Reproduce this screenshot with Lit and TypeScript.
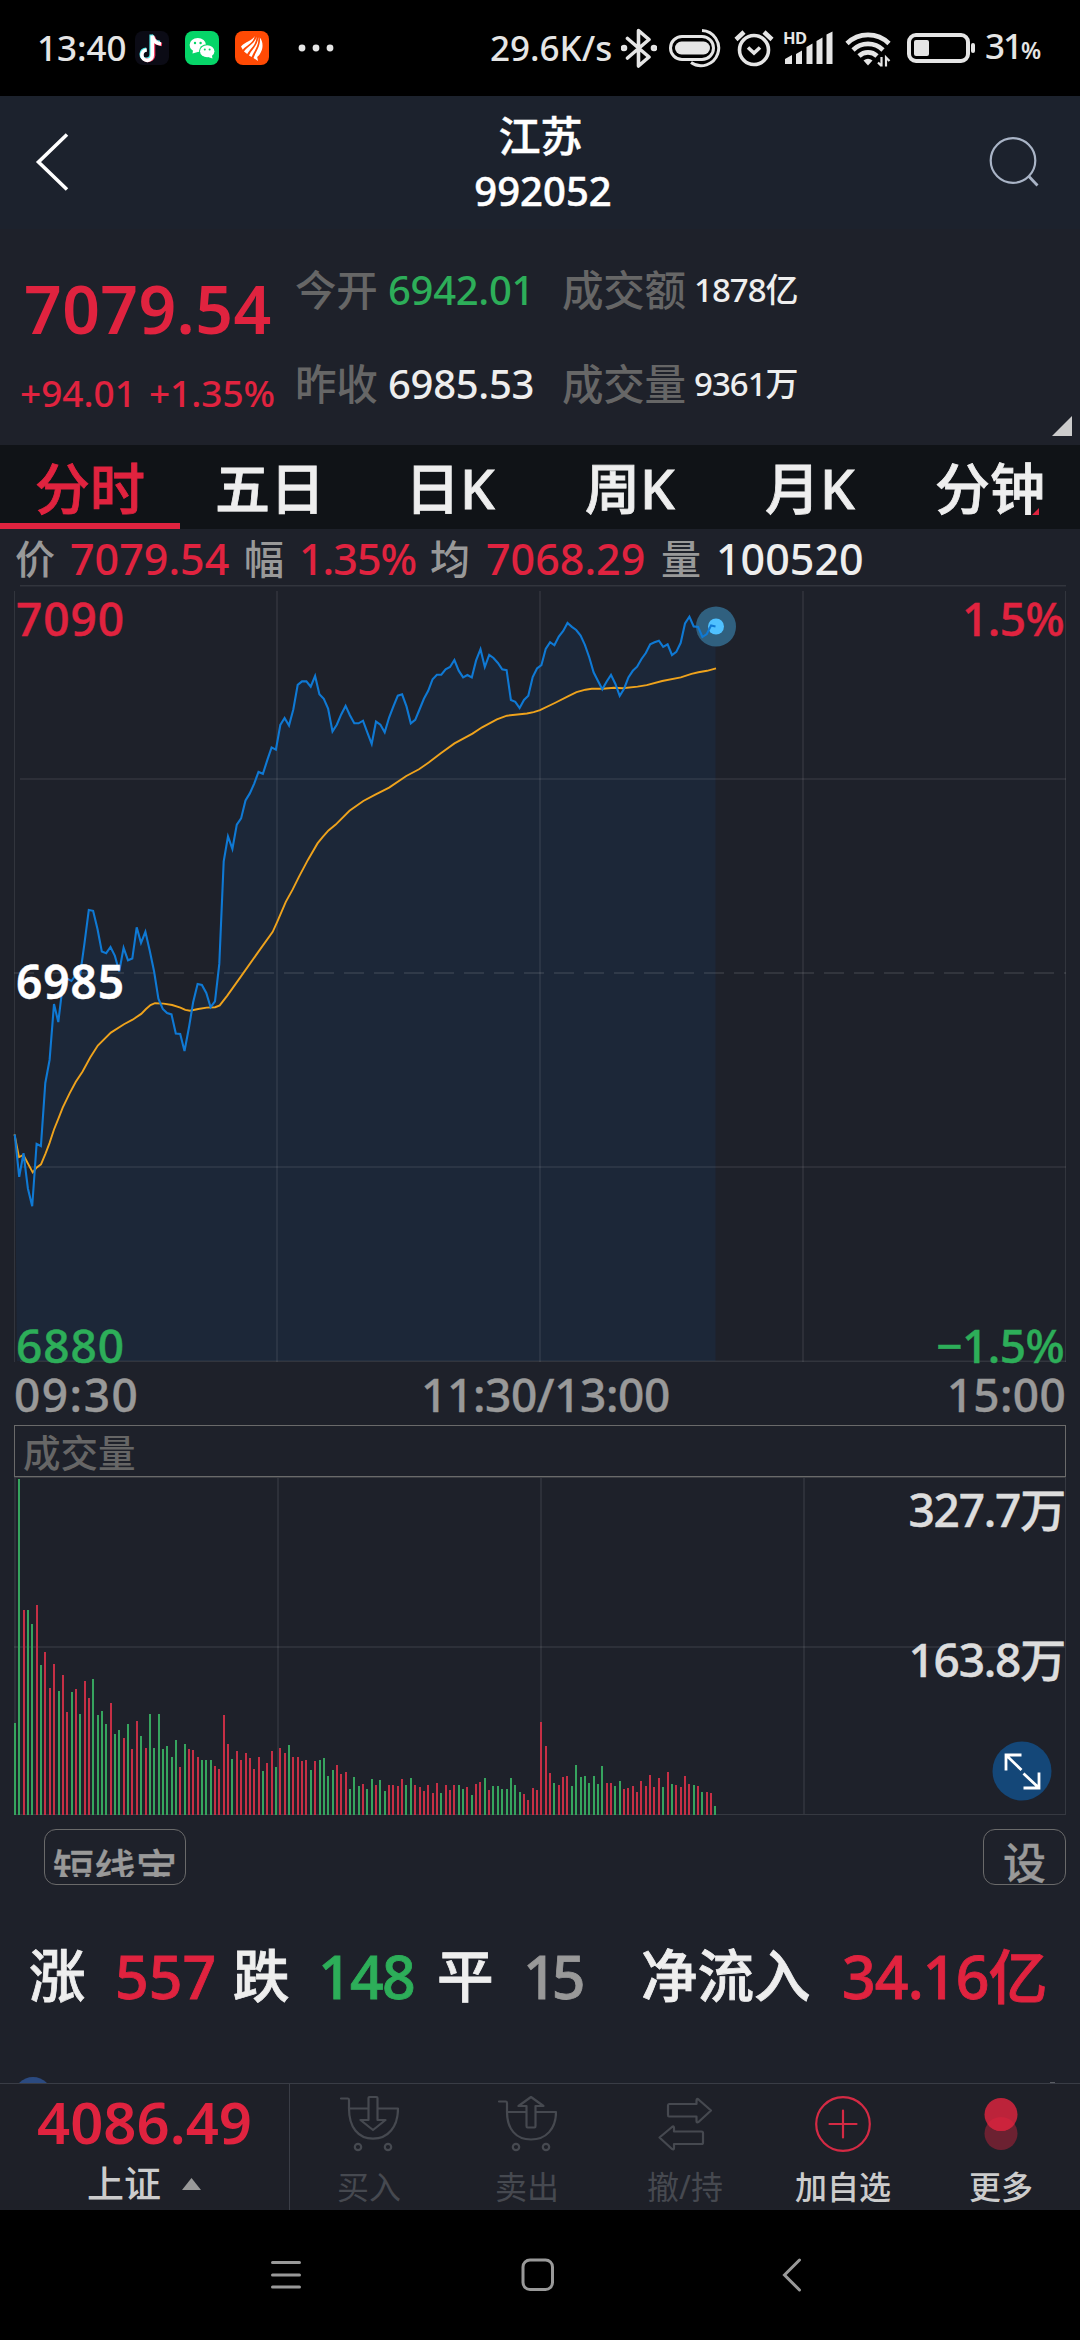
import { LitElement, html, svg, css } from "lit";
import { customElement } from "lit/decorators.js";

const STEP = 4.352;

// One y value per trading minute, starting at 09:30.
const PRICE: number[] = [
  1134.5, 1176.9, 1153.2, 1188.5, 1206.3, 1143.8, 1146, 1083, 1059.9, 1004, 1022, 985.4, 978.6, 981, 975, 975,
  943.8, 909.9, 910.8, 929, 951.4, 953.2, 947, 955.9, 971.5, 947.8, 960.3, 958.6, 927.3, 942.9, 931.8, 950.5,
  971.5, 998.7, 1009, 1013, 1014.4, 1033.6, 1034, 1051, 1027.8, 1001.9, 984, 984.9, 992.9, 1007.2, 1001.4, 963.9,
  861.3, 836.3, 848.8, 824.6, 818.4, 800.5, 793.4, 783.6, 772, 773.8, 760.4, 747.4, 749.7, 725, 718, 725.5,
  709.5, 684.9, 681.4, 681.4, 686.7, 676, 694.3, 698.8, 708.6, 731.4, 724.7, 714.4, 705.9, 715.3, 723.3, 723.3,
  720.7, 732.3, 743.9, 721.6, 724.7, 732.3, 717.5, 706.4, 695.7, 694.3, 706.4, 723.3, 719.8, 709.5, 698.8, 690.8,
  679.2, 674.7, 674.7, 669.3, 667, 660, 670.7, 677.4, 675, 677.4, 660.4, 649.2, 667, 655, 658, 663,
  669.3, 670.2, 700, 701.9, 708, 700, 695.7, 677, 668.5, 665.2, 648.9, 642.2, 645.3, 636.6, 631, 622.9,
  626.9, 630, 635.6, 644.8, 657.5, 672.3, 681, 689.2, 681.5, 674.9, 684, 695.8, 688.7, 677.4, 670.8, 666.7,
  659, 653, 644.3, 642.2, 640.7, 646.8, 644.3, 655, 651.9, 642.8, 623.4, 616.7, 626.4, 626.9, 637, 634,
  625.4, 626.4,
];

const AVERAGE =
  "14.5,1134.4 19,1157.2 23.4,1155 32.7,1172.4 36.8,1167.5 41,1164.3 45.5,1153.6 49.6,1142.9 54,1129.5 58.5,1118.4 " +
  "62.7,1107.6 69.6,1093.4 75.8,1081.8 82.6,1071.5 90.2,1057.6 97.8,1045.6 110.9,1032.6 124,1024.2 132.6,1019.7 " +
  "141.2,1013.9 146,1009 150.5,1005 155,1003.2 163.6,1003.6 172.2,1005 180.4,1007.6 185.3,1009.9 190,1010.8 " +
  "198.3,1009 206.6,1007.6 215.2,1007.2 219.7,1005.4 227.3,995.6 241,976.4 258.3,951.9 272.7,931.8 277.2,921.9 " +
  "285.8,901.9 292.7,889.4 298.9,876.9 307.9,859.9 317.5,843.4 323,836.7 328.5,830.4 335.7,824.6 349.5,810.8 " +
  "363.3,801 375.3,794.7 389.1,787.6 406.3,776 419,769.3 428.7,762.6 440.8,753.2 454.5,743.4 472.5,733.6 " +
  "482.1,727.3 496.9,719.3 506.9,715.7 526.9,713.5 533.7,712.1 540,710.2 554.8,703 567.9,696.3 576.5,692.2 " +
  "585.5,689.7 591.7,688.7 602.7,688.7 614,687.7 622.6,688.2 637.5,686.6 646.7,685.1 662.2,681 680.8,677.4 " +
  "691.5,673.9 698.4,672.3 707,670.8 716,668.3";

// Direction (G down, R up) and bar height per minute.
const VOLUME = (
  "G92 G336 R205 G205 G191 R210 G150 R163 R127 R151 G124 R140 R103 G123 R126 G101 R134 R117 G136 G100 G104 G91 R112 " +
  "G81 G85 R77 G91 R66 R94 G79 R67 G101 G67 G101 G66 G69 G58 G75 R48 G71 R66 R65 R58 G55 G55 G55 R49 R46 R100 R71 " +
  "G56 R64 R55 R62 R57 R46 R58 G44 R52 R64 G48 R67 R62 G70 R58 R58 R54 R55 G45 R54 G55 G57 G39 G45 R50 R41 R43 G26 " +
  "G38 G29 R31 G26 G36 R30 G35 G24 R30 R30 R29 R36 G30 G37 R30 R28 R24 R30 R22 R32 G22 R30 R25 R30 G30 G26 R28 G20 " +
  "R31 R33 G37 R25 G29 G29 G26 G26 G37 G30 G23 R21 R15 R27 R25 R93 R69 R42 G32 R30 R38 R39 G29 G50 G38 G39 G32 G39 " +
  "G31 G49 R32 R32 G29 G34 R26 R27 R29 R23 R34 R29 R40 R28 R37 G28 R43 G31 R30 R28 R39 R31 G30 R29 G23 R23 R22 G9"
).split(" ");

const TABS = ["分时", "五日", "日K", "周K", "月K", "分钟"];

const baseText = css`
  :host {
    display: block;
    font-family: "Noto Sans", "Noto Sans CJK SC", sans-serif;
    font-weight: 500;
  }
  * {
    box-sizing: border-box;
  }
  svg {
    display: block;
    flex: none;
  }
  .up {
    color: #e0233f;
  }
  .down {
    color: #2dae59;
  }
`;

@customElement("status-bar")
class StatusBar extends LitElement {
  static styles = [
    baseText,
    css`
      .bar {
        height: 96px;
        background: #000;
        color: #e5e5e5;
        display: flex;
        align-items: center;
        justify-content: space-between;
        padding: 0 43px 0 37px;
        font-size: 35px;
        line-height: 40px;
      }
      .side {
        display: flex;
        align-items: center;
      }
      .time {
        width: 98px;
      }
      .apps {
        display: flex;
        gap: 16px;
      }
      .dots {
        margin-left: 29px;
      }
      .speed {
        width: 131px;
      }
      .ring {
        margin-left: 12px;
      }
      .alarm {
        margin-left: 11px;
      }
      .signal {
        margin-left: 9px;
      }
      .wifi {
        margin-left: 12px;
      }
      .battery {
        margin-left: 16px;
      }
      .level {
        display: flex;
        align-items: baseline;
        margin-left: 8px;
        width: 52px;
        letter-spacing: -2px;
      }
      .level small {
        font-size: 23px;
        font-weight: 600;
      }
    `,
  ];
  render() {
    return html`<div class="bar">
      <div class="side">
        <span class="time">13:40</span>
        <div class="apps">
          <svg width="34" height="34" viewBox="0 0 34 34">
            <rect width="34" height="34" rx="8" fill="#0b0b15" />
            <g fill="none" stroke-width="3.6">
              <path d="M16.2 3.5v20a5 5 0 1 1-5-5.3M16.5 4c.6 4.500 4 7 8.500 7.500" stroke="#4de8ea" />
              <path d="M18.500 5.500v19a5.500 5.500 0 0 1-9 3.500M18.500 6c.6 4.500 4 7 8.500 7.500" stroke="#f8385c" />
              <path d="M17.300 4.500v19.500a5.200 5.200 0 1 1-5.500-5M17.500 5c.6 4.500 4 7.500 8.500 8" stroke="#fff" />
            </g>
          </svg>
          <svg width="34" height="34" viewBox="0 0 34 34">
            <rect width="34" height="34" rx="8" fill="#06d568" />
            <path d="M7.500 22.500l.8-4.500 4.500 3z" fill="#fff" />
            <ellipse cx="12.800" cy="14" rx="8.200" ry="7" fill="#fff" />
            <ellipse cx="22" cy="20" rx="8" ry="6.800" fill="#06d568" />
            <path d="M27.500 27.500l-.8-4-3.700 2.500z" fill="#fff" />
            <ellipse cx="22.200" cy="20.300" rx="7.200" ry="6" fill="#fff" />
            <g fill="#06d568">
              <circle cx="10" cy="12" r="1.200" /><circle cx="15.600" cy="12" r="1.200" />
              <circle cx="19.800" cy="18.600" r="1" /><circle cx="24.600" cy="18.600" r="1" />
            </g>
          </svg>
          <svg width="34" height="34" viewBox="0 0 34 34">
            <rect width="34" height="34" rx="8" fill="#ff4a04" />
            <g fill="#fff">
              <path d="M19.800 5C17 10 10.500 10.500 6 15.500l1.800 3.200C10.500 14.500 18 13 19.800 5z" />
              <path d="M21.500 5.500C20 13 12.500 15 9 20.500l3.200 2.500C15 17.500 21.500 14 21.500 5.500z" />
              <path d="M23.200 6C23.200 14 17 18 14 24.500l2.600 1.600C19 20 24.500 14.500 23.200 6z" />
              <path d="M24.800 6.500c1.200 8-3.500 13-6.300 20.500l4.500 3-.8-4C27 22 30 13 24.800 6.500z" />
            </g>
          </svg>
        </div>
        <svg class="dots" width="36" height="8" viewBox="0 0 36 8" fill="#e5e5e5">
          <circle cx="4" cy="4" r="3.400" /><circle cx="18" cy="4" r="3.400" /><circle cx="32" cy="4" r="3.400" />
        </svg>
      </div>
      <div class="side">
        <span class="speed">29.6K/s</span>
        <svg width="36" height="40" viewBox="0 0 36 40" fill="none" stroke="#e5e5e5" stroke-width="3.600" stroke-linejoin="round" stroke-linecap="round">
          <path d="M6.500 10.500L28 29l-10.500 9V2.500L28 11.500 6.500 30" />
          <circle cx="3" cy="20" r="1.500" /><circle cx="33" cy="20" r="1.500" />
        </svg>
        <svg class="ring" width="54" height="40" viewBox="0 0 54 40" fill="none" stroke="#e5e5e5">
          <rect x="1.500" y="8.500" width="43" height="23" rx="11.500" stroke-width="3" />
          <rect x="6" y="13.500" width="35" height="13" rx="6.500" fill="#e5e5e5" stroke="none" />
          <path d="M33 2.500a17.600 17.600 0 1 1-11 32" stroke-width="3" />
        </svg>
        <svg class="alarm" width="40" height="40" viewBox="0 0 40 40" fill="none" stroke="#e5e5e5" stroke-width="3.600">
          <circle cx="20" cy="22" r="14.500" />
          <path d="M14 19.500l6 5.500 6-5.500" />
          <path d="M2 11.500L10 4M30 4l8 7.500" stroke-width="4.500" />
        </svg>
        <svg class="signal" width="50" height="40" viewBox="0 0 50 40" fill="#e5e5e5">
          <path d="M2 31l7-4v9H2zM13 26l6-3.500V36h-6zM23.500 19l6-3.500V36h-6zM33.500 13l6-3.500V36h-6zM43.500 6.500l6-3V36h-6z" />
          <text x="0" y="16" font-size="16.500" font-weight="700" letter-spacing="-0.6">HD</text>
        </svg>
        <svg class="wifi" width="46" height="40" viewBox="0 0 46 40" fill="none" stroke="#e5e5e5">
          <path d="M2 15.500a30 30 0 0 1 42 0M8 22a21.500 21.500 0 0 1 30 0M14 28a13 13 0 0 1 18 0" stroke-width="4.600" />
          <path d="M18.500 32.500q4.500-3.500 9 0L23 37.500z" fill="#e5e5e5" stroke="none" />
          <path d="M36.500 29v9.500M33 34.500l3.500 3.500M41 38.500V29.500l3.500 3.500" stroke-width="2.200" />
        </svg>
        <svg class="battery" width="70" height="40" viewBox="0 0 70 40" fill="none">
          <rect x="2" y="7" width="59" height="26" rx="7" stroke="#e5e5e5" stroke-width="4" />
          <rect x="7" y="12" width="15" height="16" rx="2" fill="#e5e5e5" />
          <rect x="64" y="15" width="4" height="10" rx="2" fill="#e5e5e5" />
        </svg>
        <span class="level">31<small>%</small></span>
      </div>
    </div>`;
  }
}

@customElement("title-bar")
class TitleBar extends LitElement {
  static styles = [
    baseText,
    css`
      .bar {
        height: 133px;
        background: #1c222d;
        color: #fff;
        display: flex;
        justify-content: space-between;
        padding: 0 40px 0 34px;
      }
      .icon {
        margin-top: 34px;
      }
      .titles {
        padding: 12px 0 0 28px;
        text-align: center;
        -webkit-text-stroke: 0.5px currentColor;
      }
      .name {
        font-size: 42px;
        line-height: 56px;
        margin-left: -5px;
      }
      .code {
        font-size: 40px;
        line-height: 54px;
      }
    `,
  ];
  render() {
    return html`<div class="bar">
      <svg class="icon" width="36" height="64" viewBox="0 0 36 64" fill="none" stroke="#fff" stroke-width="3.600">
        <path d="M33 4.500L4.500 32 33 59.500" />
      </svg>
      <div class="titles">
        <div class="name">江苏</div>
        <div class="code">992052</div>
      </div>
      <svg class="icon" width="52" height="64" viewBox="0 0 52 64" fill="none" stroke="#a9b4c6" stroke-width="2.200">
        <circle cx="25" cy="30.500" r="22.300" />
        <path d="M40.500 46l9 9.500" stroke-width="2.800" />
      </svg>
    </div>`;
  }
}

@customElement("quote-panel")
class QuotePanel extends LitElement {
  static styles = [
    baseText,
    css`
      .panel {
        height: 216px;
        display: grid;
        grid-template-columns: 271px 1fr 20px;
        padding: 1px 8px 0 24px;
      }
      .price {
        font-size: 66px;
        line-height: 80px;
        margin-top: 38px;
        font-weight: 600;
        letter-spacing: 0.4px;
      }
      .change {
        display: flex;
        gap: 13px;
        font-size: 37px;
        line-height: 50px;
        margin-top: 20px;
        margin-left: -4px;
      }
      .facts {
        display: grid;
        grid-template-columns: 93px 174px 132px 1fr;
        grid-auto-rows: 60px;
        row-gap: 34px;
        padding-top: 30px;
        line-height: 60px;
        font-size: 40px;
        color: #eee;
        letter-spacing: -0.3px;
      }
      .label {
        color: #666;
        font-size: 41.5px;
      }
      .small {
        font-size: 33px;
        letter-spacing: -1px;
      }
      .corner {
        margin-top: 186px;
      }
    `,
  ];
  render() {
    return html`<div class="panel">
      <div>
        <div class="price up">7079.54</div>
        <div class="change up"><span>+94.01</span><span>+1.35%</span></div>
      </div>
      <div class="facts">
        <span class="label">今开</span><span class="down">6942.01</span>
        <span class="label">成交额</span><span class="small">1878亿</span>
        <span class="label">昨收</span><span>6985.53</span>
        <span class="label">成交量</span><span class="small">9361万</span>
      </div>
      <svg class="corner" width="20" height="20" viewBox="0 0 20 20"><path d="M20 0v20H0z" fill="#ccc" /></svg>
    </div>`;
  }
}

@customElement("period-tabs")
class PeriodTabs extends LitElement {
  static styles = [
    baseText,
    css`
      .tabs {
        display: grid;
        grid-template-columns: repeat(6, 180px);
        height: 84px;
        background: #101317;
      }
      .tab {
        color: #eee;
        font-size: 55px;
        line-height: 86px;
        height: 84px;
        text-align: center;
        border-bottom: 6px solid transparent;
        position: relative;
        -webkit-text-stroke: 0.8px currentColor;
      }
      .active {
        color: #e0233f;
        border-color: #e0233f;
      }
      .mark {
        position: absolute;
        right: 41px;
        top: 63px;
      }
    `,
  ];
  render() {
    return html`<div class="tabs">
      ${TABS.map(
        (t, i) => html`<div class="tab ${i === 0 ? "active" : ""}">
          ${t}${i === 5
            ? html`<svg class="mark" width="7" height="7" viewBox="0 0 7 7"><path d="M7 0v7H0z" fill="#e0233f" /></svg>`
            : ""}
        </div>`
      )}
    </div>`;
  }
}

@customElement("price-chart")
class PriceChart extends LitElement {
  static styles = [
    baseText,
    css`
      .legend {
        display: grid;
        grid-template-columns: 55px 174px 55px 131px 56px 175px 55px 1fr;
        height: 56px;
        padding-left: 15px;
        line-height: 60px;
        font-size: 43px;
        color: #eee;
      }
      .label {
        color: #999;
        font-size: 40px;
      }
      .ratio {
        letter-spacing: -1px;
      }
      .plot {
        position: relative;
        height: 778px;
      }
      .tag {
        position: absolute;
        font-size: 46px;
        line-height: 50px;
        letter-spacing: 0.9px;
        -webkit-text-stroke: 0.5px currentColor;
      }
      .high {
        left: 16px;
        top: 8px;
      }
      .mid {
        left: 16px;
        top: 371px;
        color: #fff;
        font-weight: 600;
      }
      .low {
        left: 16px;
        top: 735px;
      }
      .high-pct {
        right: 16px;
        top: 8px;
        letter-spacing: -0.6px;
      }
      .low-pct {
        right: 16px;
        top: 735px;
        letter-spacing: -0.6px;
      }
      .axis {
        display: flex;
        justify-content: space-between;
        height: 62px;
        line-height: 62px;
        padding: 0 14px;
        font-size: 46px;
        letter-spacing: 1.5px;
        color: #999;
        -webkit-text-stroke: 0.4px currentColor;
      }
      .noon {
        letter-spacing: -0.4px;
        padding-left: 5px;
      }
      .close {
        letter-spacing: 0.3px;
      }
    `,
  ];
  render() {
    const line = PRICE.map((y, i) => `${(14.8 + i * STEP).toFixed(1)},${y}`).join(" ");
    return html`<div class="legend">
        <span class="label">价</span><span class="up">7079.54</span> <span class="label">幅</span
        ><span class="up ratio">1.35%</span> <span class="label">均</span><span class="up">7068.29</span>
        <span class="label">量</span><span>100520</span>
      </div>
      <div class="plot">
        <svg width="1080" height="778" viewBox="0 585 1080 778">
          <polygon points="${line} 715.5,1361 17,1361" fill="#1c2738" />
          <g stroke="#fff" stroke-opacity=".09" stroke-width="1.500">
            <path d="M20 585.750H1066M20 779H1066M20 1167H1066M20 1361.300H1066" />
            <path d="M14.500 591V1362M1065.500 591V1362" stroke-width="1" />
            <path d="M277 591V1362M540 591V1362M803 591V1362" />
            <path d="M14 973H1066" stroke-dasharray="20 10" stroke-opacity=".12" />
          </g>
          <circle cx="716" cy="626.500" r="20" fill="#30607f" />
          <circle cx="716" cy="626.500" r="8" fill="#4fc1ff" />
          <polyline points=${AVERAGE} fill="none" stroke="#efa31c" stroke-width="1.900" />
          <polyline points=${line} fill="none" stroke="#0f79d4" stroke-width="2.100" />
        </svg>
        <span class="tag high up">7090</span>
        <span class="tag mid">6985</span>
        <span class="tag low down">6880</span>
        <span class="tag high-pct up">1.5%</span>
        <span class="tag low-pct down">−1.5%</span>
      </div>
      <div class="axis">
        <span>09:30</span><span class="noon">11:30/13:00</span><span class="close">15:00</span>
      </div>`;
  }
}

@customElement("volume-chart")
class VolumeChart extends LitElement {
  static styles = [
    baseText,
    css`
      .head {
        height: 52px;
        margin: 0 14px;
        border: 1px solid #6a6a6a;
        padding-left: 8px;
        font-size: 37.5px;
        line-height: 54px;
        color: #666;
      }
      .plot {
        position: relative;
        height: 338px;
      }
      .scale {
        position: absolute;
        right: 15px;
        font-size: 46px;
        line-height: 50px;
        color: #ddd;
        letter-spacing: -1.2px;
        -webkit-text-stroke: 0.5px currentColor;
      }
      .max {
        top: 7px;
      }
      .half {
        top: 157px;
      }
      .expand {
        position: absolute;
        right: 28px;
        top: 264px;
      }
    `,
  ];
  render() {
    return html`<div class="head">成交量</div>
      <div class="plot">
        <svg width="1080" height="338" viewBox="0 0 1080 338">
          <g fill="#fff" fill-opacity=".07">
            <rect x="14" y="0" width="2" height="338" />
            <rect x="277" y="0" width="2" height="338" />
            <rect x="540" y="0" width="2" height="338" />
            <rect x="803" y="0" width="2" height="338" />
            <rect x="14" y="169" width="1052" height="2" />
          </g>
          <rect x="14" y="0" width="1052" height="1" fill="#3a3c42" />
          <rect x="1065" y="0" width="1" height="338" fill="#363941" />
          <rect x="14" y="337" width="1052" height="1" fill="#363941" />
          ${VOLUME.map((v, i) => {
            const h = Number(v.slice(1));
            return svg`<rect x=${14 + Math.round(i * 4.35)} y=${338 - h} width="2" height=${h}
              fill=${v[0] === "R" ? "#c62f45" : "#36a45e"} />`;
          })}
        </svg>
        <span class="scale max">327.7万</span>
        <span class="scale half">163.8万</span>
        <svg class="expand" width="60" height="60" viewBox="0 0 60 60" fill="none" stroke="#fff" stroke-width="2.800">
          <circle cx="30" cy="30" r="29.500" fill="#144778" stroke="none" />
          <path d="M29.500 14H14v15.500M14 14l15.500 15M31.500 47H47V31.500M47 47L31.500 32.500" />
        </svg>
      </div>`;
  }
}

@customElement("market-summary")
class MarketSummary extends LitElement {
  static styles = [
    baseText,
    css`
      .tools {
        display: flex;
        justify-content: space-between;
        padding: 14px 14px 0 44px;
      }
      .tool {
        height: 56px;
        border: 1px solid #6a6a6a;
        border-radius: 12px;
        color: #999;
        overflow: hidden;
        -webkit-text-stroke: 0.3px currentColor;
      }
      .short {
        width: 142px;
        padding-top: 14px;
        text-align: center;
      }
      .clip {
        height: 33px;
        overflow: hidden;
        font-size: 41.5px;
        line-height: 50px;
        white-space: nowrap;
      }
      .set {
        width: 83px;
        font-size: 43px;
        line-height: 66px;
        text-align: center;
      }
      .breadth {
        display: grid;
        grid-template-columns: 86px 118px 85px 119px 86px 118px 201px 1fr;
        padding-left: 29px;
        margin-top: 46px;
        height: 90px;
        line-height: 90px;
        font-size: 59px;
        -webkit-text-stroke: 0.8px currentColor;
      }
      .label {
        color: #eee;
        font-size: 56.5px;
      }
      .tight {
        letter-spacing: -1.8px;
      }
      .flat {
        color: #999;
        letter-spacing: -5px;
      }
      .net {
        letter-spacing: -0.9px;
      }
      .peek {
        height: 62px;
        overflow: hidden;
      }
    `,
  ];
  render() {
    return html`<div class="tools">
        <div class="tool short"><div class="clip">短线宝</div></div>
        <div class="tool set">设</div>
      </div>
      <div class="breadth">
        <span class="label">涨</span><span class="up">557</span> <span class="label">跌</span
        ><span class="down tight">148</span> <span class="label">平</span><span class="flat">15</span>
        <span class="label">净流入</span><span class="up net">34.16亿</span>
      </div>
      <div class="peek">
        <svg width="1080" height="62" viewBox="0 0 1080 62">
          <circle cx="33" cy="75" r="19" fill="#2b4a80" />
          <rect x="1050" y="61" width="5" height="1" fill="#5a5d64" />
        </svg>
      </div>`;
  }
}

@customElement("trade-bar")
class TradeBar extends LitElement {
  static styles = [
    baseText,
    css`
      .bar {
        display: grid;
        grid-template-columns: 290px repeat(5, 158px);
        height: 127px;
        background: #1e2028;
        border-top: 1px solid #3a3d46;
      }
      .index {
        border-right: 1px solid #3a3d46;
        color: #ccc;
        text-align: center;
      }
      .value {
        font-size: 58px;
        font-weight: 600;
        line-height: 76px;
      }
      .market {
        display: flex;
        align-items: center;
        gap: 21px;
        padding-left: 87px;
        font-size: 37px;
        line-height: 48px;
      }
      .item {
        display: flex;
        flex-direction: column;
        align-items: center;
        padding-top: 10px;
        color: #ccc;
        font-size: 32px;
        line-height: 40px;
        gap: 13px;
      }
      .off {
        color: #464950;
        font-weight: 400;
      }
    `,
  ];
  render() {
    const icon = (body: unknown) => html`<svg
      width="60"
      height="60"
      viewBox="0 0 60 60"
      fill="none"
      stroke="#464950"
      stroke-width="2.200"
      stroke-linejoin="round"
      stroke-linecap="round"
    >
      ${body}
    </svg>`;
    return html`<div class="bar">
      <div class="index">
        <div class="value up">4086.49</div>
        <div class="market">
          <span>上证</span>
          <svg width="19" height="12" viewBox="0 0 19 12"><path d="M9.500 0L19 12H0z" fill="#999" /></svg>
        </div>
      </div>
      <div class="item off">
        ${icon(svg`<path d="M2 4.500h7q1 0 1 1.500V14.500H29.500M38.500 14.500H59C59 33 49 44.700 34 44.700S10 33 10 14.500M29.500 4q0-1 1-1h7q1 0 1 1V26h8L34 36 21.500 26h8z"/>
          <circle cx="19" cy="53" r="3.200"/><circle cx="49" cy="53" r="3.200"/>`)}
        <span>买入</span>
      </div>
      <div class="item off">
        ${icon(svg`<path d="M2 7.500h7q1 0 1 1.500V18H29.500M38.500 18H59C59 35 49 45.500 34 45.500S10 35 10 18M29.500 32q0 1.500 1 1.500h7q1 0 1-1.500V12h8L34 3 21.500 12h8z"/>
          <circle cx="19" cy="53" r="3.200"/><circle cx="49" cy="53" r="3.200"/>`)}
        <span>卖出</span>
      </div>
      <div class="item off">
        ${icon(svg`<path d="M14 10h27.500V6.500q0-2.500 2-1L56 16.500 43.500 28q-2 1-2-1V22.500H14q-1 0-1-1.500V11.500q0-1.500 1-1.500zM46.500 37.500H19V34q0-2.500-2-1L4.500 43.500 17 55q2 1 2-1V50h27.500q1.500 0 1.500-1.500v-9.500q0-1.500-1.500-1.500z"/>`)}
        <span>撤/持</span>
      </div>
      <div class="item">
        ${icon(svg`<g stroke="#d42a44"><circle cx="30" cy="30" r="26.800"/><path d="M30 16.500v27M16.500 30h27"/></g>`)}
        <span>加自选</span>
      </div>
      <div class="item">
        ${icon(svg`<g stroke="none"><circle cx="30" cy="39.500" r="16.500" fill="#6c2131"/><circle cx="30" cy="20.500" r="16.500" fill="#bc233a"/>
          <path d="M16.500 30a16.500 16.500 0 0 1 27 0a16.500 16.500 0 0 1-27 0z" fill="#cc233c"/></g>`)}
        <span>更多</span>
      </div>
    </div>`;
  }
}

@customElement("app-root")
class AppRoot extends LitElement {
  static styles = [
    baseText,
    css`
      :host {
        width: 1080px;
        height: 2340px;
        overflow: hidden;
        background: #1e212a;
      }
      .nav {
        height: 130px;
        background: #000;
        display: flex;
        align-items: center;
        padding-left: 270px;
      }
      .home {
        margin-left: 219px;
      }
      .back {
        margin-left: 227px;
      }
    `,
  ];
  render() {
    return html`<status-bar></status-bar>
      <title-bar></title-bar>
      <quote-panel></quote-panel>
      <period-tabs></period-tabs>
      <price-chart></price-chart>
      <volume-chart></volume-chart>
      <market-summary></market-summary>
      <trade-bar></trade-bar>
      <div class="nav">
        <svg width="32" height="34" viewBox="0 0 32 34" fill="none" stroke="#999" stroke-width="3" stroke-linecap="round">
          <path d="M2.500 4.500h27M2.500 17h27M2.500 29h27" />
        </svg>
        <svg class="home" width="34" height="34" viewBox="0 0 34 34" fill="none" stroke="#999" stroke-width="3">
          <rect x="2" y="2" width="29.500" height="29.500" rx="7" />
        </svg>
        <svg class="back" width="20" height="34" viewBox="0 0 20 34" fill="none" stroke="#999" stroke-width="3" stroke-linecap="round">
          <path d="M17.500 2L2.500 17l15 15" />
        </svg>
      </div>`;
  }
}
